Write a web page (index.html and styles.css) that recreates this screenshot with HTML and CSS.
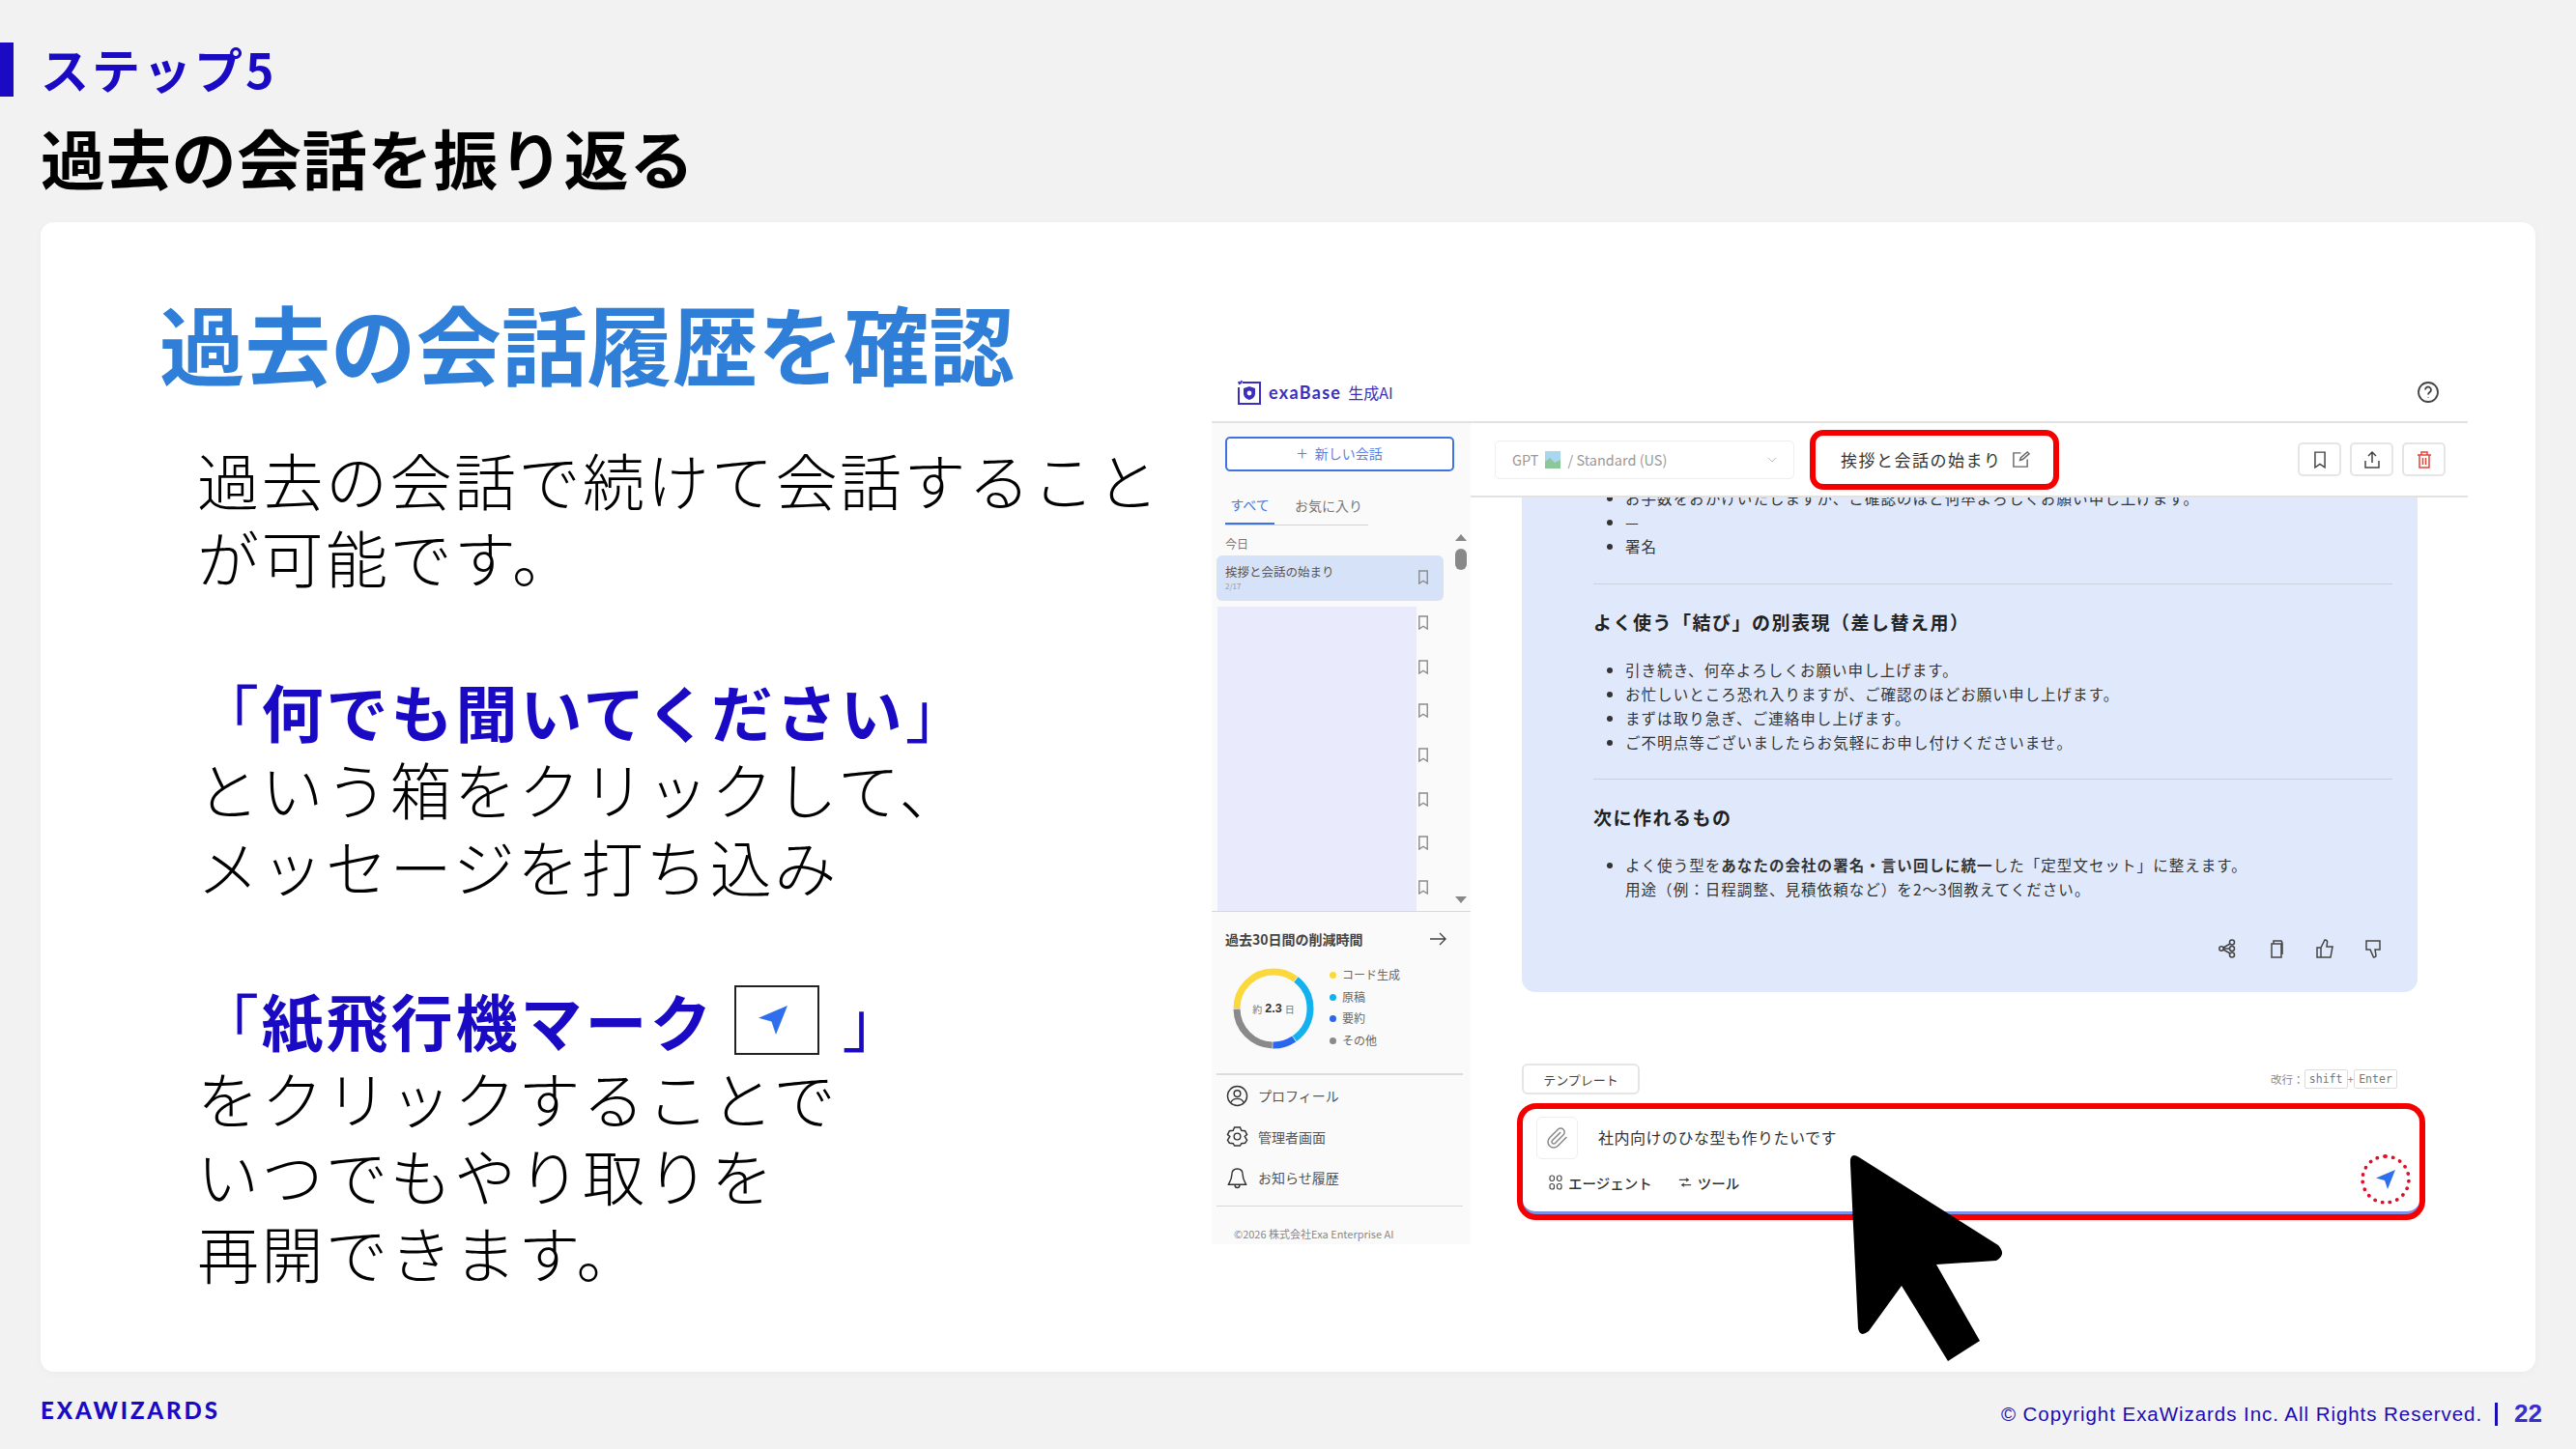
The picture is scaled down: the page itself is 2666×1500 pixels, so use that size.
FILE: index.html
```html
<!DOCTYPE html>
<html lang="ja">
<head>
    <meta charset="utf-8">
    <title>過去の会話を振り返る</title>
    <link rel="stylesheet" href="styles.css">
</head>
<body>
    <svg class="sprite" width="0" height="0">
        <symbol id="plane" viewBox="0 0 24 24"><path d="M22 2 L2 10.5 L11 13 L14 22 Z"/></symbol>
        <symbol id="bookmark" viewBox="0 0 12 16"><path d="M1.5 1h9v14l-4.5-3-4.5 3z"/></symbol>
    </svg>

    <div class="slide">
        <div class="slide-head">
            <div class="step">ステップ5</div>
            <h1>過去の会話を振り返る</h1>
        </div>

        <div class="card">
            <div class="lead">
                <h2>過去の会話履歴を確認</h2>
                <div class="lead-body">
                    <p>過去の会話で続けて会話すること<br>が可能です。</p>
                    <p><span class="bracket">「</span><b>何でも聞いてください</b><span class="bracket">」</span><br>という箱をクリックして、<br>メッセージを打ち込み</p>
                    <p><span class="bracket">「</span><b>紙飛行機マーク</b><span class="plane-box"><svg class="plane-icon"><use href="#plane"/></svg></span><span class="bracket">」</span><br>をクリックすることで<br>いつでもやり取りを<br>再開できます。</p>
                </div>
            </div>

            <div class="shot">
                <div class="shot-top">
                    <div class="logo">
                        <svg class="logo-mark" viewBox="0 0 26 26">
                            <path class="logo-frame" d="M6 3h18v22H2V8"/>
                            <path class="logo-shield" d="M13 7l6 2v5c0 4-3 6-6 7-3-1-6-3-6-7V9z"/>
                            <circle class="logo-dot" cx="13" cy="14" r="2.4"/>
                            <path class="logo-frame" d="M2 2l1 3M5 1l-1 3"/>
                        </svg>
                        <span class="logo-name">exaBase</span>
                        <span class="logo-sub">生成AI</span>
                    </div>
                    <svg class="help" viewBox="0 0 24 24">
                        <circle cx="12" cy="12" r="10"/>
                        <path d="M9 9.5a3 3 0 1 1 4.5 2.6c-1 .6-1.5 1.1-1.5 2.4M12 17v.6"/>
                    </svg>
                </div>

                <div class="shot-body">
                    <div class="side">
                        <div class="new-chat"><span class="plus">+</span>新しい会話</div>
                        <div class="tabs">
                            <span class="tab tab-active">すべて</span>
                            <span class="tab">お気に入り</span>
                        </div>

                        <div class="history">
                            <div class="history-list">
                                <div class="day">今日</div>
                                <div class="chat-item">
                                    <div>
                                        <div class="chat-name">挨拶と会話の始まり</div>
                                        <div class="chat-date">2/17</div>
                                    </div>
                                    <svg class="bm"><use href="#bookmark"/></svg>
                                </div>
                                <div class="masked">
                                    <div class="mask"></div>
                                    <div class="mask-marks">
                                        <svg class="bm"><use href="#bookmark"/></svg>
                                        <svg class="bm"><use href="#bookmark"/></svg>
                                        <svg class="bm"><use href="#bookmark"/></svg>
                                        <svg class="bm"><use href="#bookmark"/></svg>
                                        <svg class="bm"><use href="#bookmark"/></svg>
                                        <svg class="bm"><use href="#bookmark"/></svg>
                                        <svg class="bm"><use href="#bookmark"/></svg>
                                    </div>
                                </div>
                            </div>
                            <div class="scroll">
                                <div class="scroll-up"></div>
                                <div class="scroll-thumb"></div>
                                <div class="scroll-down"></div>
                            </div>
                        </div>

                        <div class="saving">
                            <div class="saving-head">
                                <span>過去30日間の削減時間</span>
                                <svg class="arrow" viewBox="0 0 18 14"><path d="M1 7h16M11 1l6 6-6 6"/></svg>
                            </div>
                            <div class="saving-body">
                                <div class="donut">
                                    <svg viewBox="0 0 84 84">
                                        <g transform="rotate(-90 42 42)">
                                            <circle class="seg seg-yellow" cx="42" cy="42" r="38" pathLength="360" stroke-dasharray="127 233" stroke-dashoffset="90"/>
                                            <circle class="seg seg-sky" cx="42" cy="42" r="38" pathLength="360" stroke-dasharray="107 253" stroke-dashoffset="-38"/>
                                            <circle class="seg seg-blue" cx="42" cy="42" r="38" pathLength="360" stroke-dasharray="35 325" stroke-dashoffset="-146"/>
                                            <circle class="seg seg-gray" cx="42" cy="42" r="38" pathLength="360" stroke-dasharray="87 273" stroke-dashoffset="-182"/>
                                        </g>
                                    </svg>
                                    <div class="donut-label">約<b>2.3</b>日</div>
                                </div>
                                <ul class="legend">
                                    <li><i class="dot dot-yellow"></i>コード生成</li>
                                    <li><i class="dot dot-sky"></i>原稿</li>
                                    <li><i class="dot dot-blue"></i>要約</li>
                                    <li><i class="dot dot-gray"></i>その他</li>
                                </ul>
                            </div>
                        </div>

                        <div class="menu">
                            <div class="menu-row">
                                <svg class="menu-icon" viewBox="0 0 24 24"><circle cx="12" cy="12" r="10.5"/><circle cx="12" cy="9.5" r="3.5"/><path d="M5 19c1.500-3 4-4 7-4s5.500 1 7 4"/></svg>
                                プロフィール
                            </div>
                            <div class="menu-row">
                                <svg class="menu-icon" viewBox="0 0 24 24"><path d="M9 2h6l1.500 3.500L20.500 6l2 4-2.500 2 2.500 4-2 3-4 .5L15 22H9l-1.500-2.500-4-.5-2-3 2.500-4-2.500-2 2-4 4-.5z"/><circle cx="12" cy="12" r="3.500"/></svg>
                                管理者画面
                            </div>
                            <div class="menu-row">
                                <svg class="menu-icon" viewBox="0 0 24 24"><path d="M12 2c-4 0-6 3-6 7 0 5-3 8-3.500 10h19c-.5-2-3.500-5-3.500-10 0-4-2-7-6-7zM9.500 19.500c0 2 1 3 2.500 3s2.500-1 2.500-3"/></svg>
                                お知らせ履歴
                            </div>
                        </div>
                        <div class="side-foot">©2026 株式会社Exa Enterprise AI</div>
                    </div>

                    <div class="main">
                        <div class="topbar">
                            <div class="model">
                                <span>GPT</span>
                                <svg class="model-pic" viewBox="0 0 16 18"><rect width="16" height="18" fill="#a9d7ee"/><path d="M0 18V11l5-4 5 5 6-3v9z" fill="#8cc79a"/></svg>
                                <span>/ Standard (US)</span>
                                <svg class="chev" viewBox="0 0 10 6"><path d="M1 1l4 4 4-4"/></svg>
                            </div>
                            <div class="chat-title">
                                挨拶と会話の始まり
                                <svg class="edit" viewBox="0 0 20 20"><path d="M10 3H2v15h15v-8M9 11l1-3 7-6 2 2-7 6z"/></svg>
                            </div>
                            <div class="top-actions">
                                <div class="icon-btn"><svg class="btn-bm"><use href="#bookmark"/></svg></div>
                                <div class="icon-btn"><svg class="btn-icon" viewBox="0 0 20 20"><path d="M10 13V2M6 6l4-4 4 4M3 11v7h14v-7"/></svg></div>
                                <div class="icon-btn"><svg class="btn-icon btn-del" viewBox="0 0 20 20"><path d="M3 5h14M7 5V2h6v3M5 5v13h10V5M8.500 8v7M11.500 8v7"/></svg></div>
                            </div>
                        </div>

                        <div class="bubble">
                            <ul class="msg-list msg-first">
                                <li>お手数をおかけいたしますが、ご確認のほど何卒よろしくお願い申し上げます。</li>
                                <li>—</li>
                                <li>署名</li>
                            </ul>
                            <hr class="msg-rule">
                            <h3>よく使う「結び」の別表現（差し替え用）</h3>
                            <ul class="msg-list">
                                <li>引き続き、何卒よろしくお願い申し上げます。</li>
                                <li>お忙しいところ恐れ入りますが、ご確認のほどお願い申し上げます。</li>
                                <li>まずは取り急ぎ、ご連絡申し上げます。</li>
                                <li>ご不明点等ございましたらお気軽にお申し付けくださいませ。</li>
                            </ul>
                            <hr class="msg-rule msg-rule-low">
                            <h3 class="msg-h-tight">次に作れるもの</h3>
                            <ul class="msg-list">
                                <li>よく使う型を<b>あなたの会社の署名・言い回しに統一</b>した「定型文セット」に整えます。<br>用途（例：日程調整、見積依頼など）を2〜3個教えてください。</li>
                            </ul>
                            <div class="msg-actions">
                                <svg viewBox="0 0 20 20"><circle cx="3" cy="10" r="2.200"/><circle cx="14" cy="3.500" r="2.500"/><circle cx="14" cy="10" r="2.500"/><circle cx="14" cy="16.500" r="2.500"/><path d="M5 10h6.500M5 9l7-4M5 11l7 4"/></svg>
                                <svg viewBox="0 0 20 20"><path d="M5 5h10v14H5zM7 5V2h8l1 2v12"/></svg>
                                <svg viewBox="0 0 20 20"><path d="M2 9h4v10H2zM6 9l4-8c2 0 3 1 2.500 3L12 8h6l-2 11H6"/></svg>
                                <svg viewBox="0 0 20 20"><path d="M3 2h14v9h-5l1 6c0 1-1 2-2.500 2L7 11H3z"/></svg>
                            </div>
                        </div>

                        <div class="composer-head">
                            <div class="template-btn">テンプレート</div>
                            <div class="keys">改行：<kbd>shift</kbd>+<kbd>Enter</kbd></div>
                        </div>

                        <div class="composer">
                            <div class="composer-in">
                                <div class="composer-top">
                                    <div class="attach">
                                        <svg viewBox="0 0 24 24"><path d="M21.440 11.050l-9.190 9.190a6 6 0 0 1-8.490-8.490l8.570-8.570A4 4 0 1 1 18 8.840l-8.590 8.570a2 2 0 0 1-2.830-2.830l8.490-8.480"/></svg>
                                    </div>
                                    <div class="composer-text">社内向けのひな型も作りたいです</div>
                                </div>
                                <div class="composer-bottom">
                                    <div class="tools">
                                        <span class="tool">
                                            <svg class="tool-icon" viewBox="0 0 14 16"><rect x="1" y="1" width="4.500" height="5.500" rx="2"/><rect x="8.500" y="1" width="4.500" height="5.500" rx="2"/><rect x="1" y="9.500" width="4.500" height="5.500" rx="2"/><rect x="8.500" y="9.500" width="4.500" height="5.500" rx="2"/></svg>
                                            エージェント
                                        </span>
                                        <span class="tool">
                                            <svg class="tool-icon" viewBox="0 0 16 14"><path d="M1 4h10M9 2l3 2-3 2M15 10H5M7 8l-3 2 3 2"/></svg>
                                            ツール
                                        </span>
                                    </div>
                                    <div class="send"><svg class="send-icon"><use href="#plane"/></svg></div>
                                </div>
                            </div>
                        </div>
                    </div>
                </div>
            </div>

            <svg class="cursor" viewBox="0 0 180 230">
                <path d="M10 20Q9 7 19 13L163 104Q172 114 161 120L99 124 144 203 111 224 63 146 29 193Q20 200 18 190Z"/>
            </svg>
        </div>

        <div class="slide-foot">
            <div class="brand">EXAWIZARDS</div>
            <div class="foot-right">
                <span class="copyright">© Copyright ExaWizards Inc. All Rights Reserved.</span>
                <span class="page-no">22</span>
            </div>
        </div>
    </div>
</body>
</html>
```

FILE: styles.css
```css
* {
    box-sizing: border-box;
    margin: 0;
    padding: 0;
}

body {
    width: 2666px;
    height: 1500px;
    overflow: hidden;
    font-family: "Noto Sans CJK JP", "Noto Sans", sans-serif;
    background: #f2f2f3;
    color: #000;
}

.sprite {
    position: absolute;
}

.slide {
    display: flex;
    flex-direction: column;
    height: 1500px;
}

/* slide header */
.slide-head {
    height: 230px;
    padding-top: 44px;
}

.step {
    height: 56px;
    padding-left: 28px;
    border-left: 14px solid #1a0ac4;
    font-size: 50px;
    line-height: 53px;
    font-weight: 700;
    letter-spacing: 3px;
    color: #1a0ac4;
}

h1 {
    height: 130px;
    padding-left: 42px;
    font-size: 67px;
    line-height: 124px;
    font-weight: 700;
    letter-spacing: 0.7px;
}

/* white card */
.card {
    position: relative;
    display: flex;
    width: 2582px;
    height: 1190px;
    margin-left: 42px;
    background: white;
    border-radius: 14px;
    box-shadow: 0 2px 10px rgba(0, 0, 0, 0.03);
}

.lead {
    width: 1212px;
    padding: 73px 0 0 123px;
}

.lead h2 {
    height: 110px;
    margin-bottom: 41.500px;
    font-size: 88.500px;
    line-height: 100px;
    font-weight: 700;
    color: #2f7fd8;
}

.lead-body {
    margin-left: 39px;
    font-size: 64px;
    line-height: 80px;
    letter-spacing: 2.5px;
    font-weight: 300;
    white-space: nowrap;
}

.lead-body p {
    margin-bottom: 80px;
}

.lead-body b {
    font-weight: 700;
    letter-spacing: 3px;
    color: #1a0ac4;
}

.bracket {
    color: #1a0ac4;
    font-weight: 400;
}

.plane-box {
    display: inline-flex;
    align-items: center;
    justify-content: center;
    width: 88px;
    height: 72px;
    margin: -20px 24px -20px 20px;
    vertical-align: 9px;
    border: 2px solid #222;
}

.plane-icon {
    width: 36px;
    height: 36px;
    margin-right: 8px;
    fill: #2f6fed;
}

/* embedded screenshot */
.shot {
    width: 1300px;
    height: 915px;
    margin-top: 145px;
    color: #333;
}

.shot-top {
    display: flex;
    align-items: center;
    justify-content: space-between;
    height: 63px;
    padding: 0 29px 0 26px;
    border-bottom: 2px solid #e2e2e2;
}

.logo {
    display: flex;
    align-items: center;
    gap: 7px;
    color: #3a2fc0;
}

.logo-mark {
    width: 26px;
    height: 26px;
}

.logo-frame {
    fill: none;
    stroke: #3a2fc0;
    stroke-width: 2;
}

.logo-shield {
    fill: #3a2fc0;
}

.logo-dot {
    fill: white;
}

.logo-name {
    font-family: Lato, sans-serif;
    font-size: 18px;
    font-weight: 700;
    letter-spacing: 1.300px;
}

.logo-sub {
    font-size: 16px;
}

.help {
    width: 24px;
    height: 24px;
    fill: none;
    stroke: #444;
    stroke-width: 1.8;
}

.shot-body {
    display: grid;
    grid-template-columns: 268px 1fr;
    height: 850px;
}

/* sidebar */
.side {
    background: #fafafa;
    font-size: 14px;
}

.new-chat {
    display: flex;
    align-items: center;
    justify-content: center;
    height: 36px;
    margin: 14px 17px 0 14px;
    padding-bottom: 2px;
    border: 2px solid #3f74e0;
    border-radius: 5px;
    background: white;
    color: #5a82e0;
    font-size: 14px;
    line-height: 28px;
}

.plus {
    margin-right: 8px;
    font-size: 20px;
    line-height: 1;
    font-weight: 300;
}

.tabs {
    display: flex;
    align-items: flex-end;
    width: 148px;
    height: 34px;
    margin: 22px 0 0 14px;
    border-bottom: 1px solid #cfd3dd;
    font-size: 14px;
    line-height: 26px;
}

.tab {
    width: 51px;
    height: 33px;
    text-align: center;
    color: #777;
    white-space: nowrap;
}

.tab + .tab {
    margin-left: 21px;
    text-align: left;
}

.tab-active {
    height: 34px;
    border-bottom: 2px solid #3f74e0;
    color: #4a78de;
}

.history {
    display: flex;
    height: 390px;
    margin-top: 9px;
}

.history-list {
    width: 252px;
}

.day {
    height: 20px;
    margin: 0 0 2px 14px;
    font-size: 12px;
    line-height: 20px;
    color: #777;
}

.chat-item {
    display: flex;
    align-items: center;
    justify-content: space-between;
    width: 235px;
    height: 47px;
    margin-left: 5px;
    padding: 0 15px 3px 9px;
    background: #d6e2f8;
    border-radius: 6px;
}

.chat-name {
    font-size: 12.500px;
    line-height: 18px;
    color: #555;
}

.chat-date {
    font-size: 8px;
    line-height: 11px;
    color: #999;
}

.bm {
    display: block;
    width: 12px;
    height: 15px;
    fill: none;
    stroke: #8c8c8c;
    stroke-width: 1.500;
}

.masked {
    display: flex;
    height: 315px;
    margin-top: 6px;
}

.mask {
    width: 206px;
    margin-left: 6px;
    background: #e9ebfd;
}

.mask-marks {
    display: flex;
    flex-direction: column;
    gap: 30.700px;
    padding: 9px 0 0 1px;
}

.scroll {
    display: flex;
    flex-direction: column;
    align-items: center;
    width: 12px;
}

.scroll-up {
    border: 6px solid transparent;
    border-top: 0;
    border-bottom: 7px solid #888;
}

.scroll-thumb {
    width: 12px;
    height: 22px;
    margin-top: 8px;
    background: #888;
    border-radius: 6px;
}

.scroll-down {
    margin-top: auto;
    margin-bottom: 8px;
    border: 6px solid transparent;
    border-bottom: 0;
    border-top: 7px solid #888;
}

.saving {
    height: 168px;
    padding-top: 18px;
    border-top: 1px solid #d8d8d8;
}

.saving-head {
    display: flex;
    align-items: center;
    justify-content: space-between;
    height: 20px;
    padding: 0 25px 0 14px;
    font-size: 14px;
    font-weight: 700;
    color: #444;
}

.arrow {
    width: 18px;
    height: 14px;
    fill: none;
    stroke: #444;
    stroke-width: 1.400;
}

.saving-body {
    display: flex;
    margin-top: 20px;
    padding-left: 22px;
}

.donut {
    position: relative;
    width: 84px;
    height: 84px;
}

.donut svg {
    display: block;
}

.seg {
    fill: none;
    stroke-width: 7;
}

.seg-yellow { stroke: #fbd83c; }
.seg-sky { stroke: #13b2ee; }
.seg-blue { stroke: #2a66f0; }
.seg-gray { stroke: #8a8a8a; }

.donut-label {
    position: absolute;
    inset: 0;
    display: flex;
    align-items: center;
    justify-content: center;
    gap: 3px;
    font-size: 10px;
    color: #777;
}

.donut-label b {
    font-family: "Liberation Sans", sans-serif;
    font-size: 12.500px;
    color: #333;
}

.legend {
    display: flex;
    flex-direction: column;
    margin: -4px 0 0 16px;
    list-style: none;
    font-size: 12px;
    line-height: 22.700px;
    color: #666;
}

.dot {
    display: inline-block;
    width: 7px;
    height: 7px;
    margin-right: 6px;
    border-radius: 50%;
    vertical-align: 1px;
}

.dot-yellow { background: #fbd83c; }
.dot-sky { background: #13b2ee; }
.dot-blue { background: #2a66f0; }
.dot-gray { background: #8a8a8a; }

.menu {
    margin: 0 8px 0 5px;
    padding: 0 0 7px;
    border-top: 2px solid #dcdcdc;
    border-bottom: 1px solid #d8d8d8;
}

.menu-row {
    display: flex;
    align-items: center;
    gap: 10px;
    height: 42.500px;
    padding-left: 10px;
    font-size: 14px;
    color: #555;
}

.menu-icon {
    width: 23px;
    height: 23px;
    fill: none;
    stroke: #333;
    stroke-width: 1.500;
}

.side-foot {
    padding: 19px 0 0 23px;
    font-size: 11px;
    line-height: 18px;
    color: #888;
}

/* chat area */
.main {
    display: flex;
    flex-direction: column;
    min-width: 0;
}

.topbar {
    display: flex;
    align-items: center;
    height: 77px;
    flex: none;
    padding: 0 23px 0 25px;
    border-bottom: 2px solid #e2e2e2;
    background: white;
}

.model {
    display: flex;
    align-items: center;
    gap: 7px;
    width: 310px;
    height: 40px;
    padding: 0 17px;
    border: 1px solid #eee;
    border-radius: 5px;
    font-size: 14.500px;
    color: #999;
}

.model-pic {
    width: 16px;
    height: 18px;
}

.chev {
    width: 10px;
    height: 6px;
    margin-left: auto;
    fill: none;
    stroke: #bbb;
}

.chat-title {
    display: flex;
    align-items: center;
    gap: 10px;
    width: 258px;
    height: 62px;
    margin-left: 16px;
    padding-left: 26px;
    border: 6px solid #f40000;
    border-radius: 14px;
    font-size: 17px;
    letter-spacing: 1.500px;
    white-space: nowrap;
}

.edit {
    width: 19px;
    height: 19px;
    fill: none;
    stroke: #666;
    stroke-width: 1.500;
}

.top-actions {
    display: flex;
    gap: 9px;
    margin-left: auto;
}

.icon-btn {
    display: flex;
    align-items: center;
    justify-content: center;
    width: 45px;
    height: 35px;
    border: 2px solid #e5e5e5;
    border-radius: 5px;
}

.btn-bm {
    width: 14px;
    height: 18px;
    fill: none;
    stroke: #444;
    stroke-width: 1.300;
}

.btn-icon {
    width: 20px;
    height: 20px;
    fill: none;
    stroke: #444;
    stroke-width: 1.500;
}

.btn-del {
    stroke: #e2453c;
}

.bubble {
    flex: none;
    width: 927px;
    height: 512px;
    margin-left: 53px;
    padding-left: 74px;
    padding-right: 26px;
    overflow: hidden;
    background: #e0e9fb;
    border-radius: 0 0 14px 14px;
    font-size: 15.500px;
    letter-spacing: 1.050px;
    color: #333;
}

.msg-list {
    margin-top: 22px;
    padding-left: 33px;
    line-height: 25px;
    white-space: nowrap;
}

.msg-first {
    margin-top: -12.500px;
}

.msg-rule {
    height: 1px;
    margin-top: 26px;
    border: 0;
    background: #c9d0de;
}

.msg-rule-low {
    margin-top: 25px;
}

.bubble h3 {
    margin-top: 24px;
    font-size: 19px;
    line-height: 30px;
    letter-spacing: 1.500px;
    font-weight: 700;
    color: #222;
}

.bubble .msg-h-tight {
    margin-top: 24px;
}

.msg-actions {
    display: flex;
    justify-content: flex-end;
    gap: 30px;
    margin-top: 39px;
    padding-right: 10px;
}

.msg-actions svg {
    width: 20px;
    height: 20px;
    fill: none;
    stroke: #444;
    stroke-width: 1.500;
}

.composer-head {
    display: flex;
    align-items: center;
    justify-content: space-between;
    height: 32px;
    margin: 74px 73px 0 53px;
}

.template-btn {
    display: flex;
    align-items: center;
    justify-content: center;
    width: 122px;
    height: 32px;
    border: 2px solid #e5e5e5;
    border-radius: 6px;
    font-size: 13px;
    color: #444;
}

.keys {
    display: flex;
    align-items: center;
    font-size: 11.500px;
    color: #888;
}

kbd {
    width: 45px;
    height: 20px;
    border: 1px solid #ddd;
    border-radius: 2px;
    font-family: "DejaVu Sans Mono", monospace;
    font-size: 11.500px;
    line-height: 18px;
    text-align: center;
    color: #777;
}

.composer {
    width: 940px;
    height: 121px;
    margin: 9px 0 0 48px;
    border: 6px solid #f40000;
    border-radius: 20px;
    background: #f40000;
}

.composer-in {
    height: 109px;
    padding: 8px 9px 0 14px;
    border-bottom: 3px solid #7a8fe6;
    border-radius: 14px;
    background: white;
}

.composer-top {
    display: flex;
    gap: 21px;
    height: 44px;
}

.attach {
    display: flex;
    align-items: center;
    justify-content: center;
    width: 43px;
    height: 44px;
    border: 1px solid #eee;
    border-radius: 6px;
}

.attach svg {
    width: 24px;
    height: 24px;
    fill: none;
    stroke: #888;
    stroke-width: 1.500;
}

.composer-text {
    font-size: 16px;
    letter-spacing: 0.500px;
    line-height: 42px;
    color: #333;
}

.composer-bottom {
    display: flex;
    align-items: center;
    justify-content: space-between;
    height: 52px;
    margin-top: -5px;
    padding-left: 13px;
}

.tools {
    display: flex;
    gap: 27px;
    padding-top: 6px;
    font-size: 14.500px;
    font-weight: 500;
    color: #333;
}

.tool {
    display: flex;
    align-items: center;
    gap: 6px;
}

.tool-icon {
    width: 14px;
    height: 16px;
    fill: none;
    stroke: #444;
    stroke-width: 1.200;
}

.send {
    display: flex;
    align-items: center;
    justify-content: center;
    width: 52px;
    height: 52px;
    border: 4.500px dotted #e0102a;
    border-radius: 50%;
}

.send-icon {
    width: 24px;
    height: 24px;
    fill: #2f6fed;
}

/* big pointer over the screenshot */
.cursor {
    position: absolute;
    left: 1863px;
    top: 955px;
    width: 180px;
    height: 230px;
    fill: #000;
}

/* slide footer */
.slide-foot {
    display: flex;
    align-items: center;
    justify-content: space-between;
    height: 80px;
    padding: 0 35px 0 42px;
}

.brand {
    margin-bottom: 2px;
    font-family: Lato, sans-serif;
    font-size: 24px;
    font-weight: 900;
    letter-spacing: 2.900px;
    color: #1a0ac4;
}

.foot-right {
    display: flex;
    align-items: center;
    padding-top: 7px;
    font-family: "Liberation Sans", sans-serif;
    color: #1c0cb4;
}

.copyright {
    font-size: 20.500px;
    letter-spacing: 0.950px;
    padding-right: 13px;
    border-right: 3px solid #1c0cb4;
}

.page-no {
    margin-left: 17px;
    font-size: 26px;
    font-weight: 700;
    color: #3a2ecb;
}
```
